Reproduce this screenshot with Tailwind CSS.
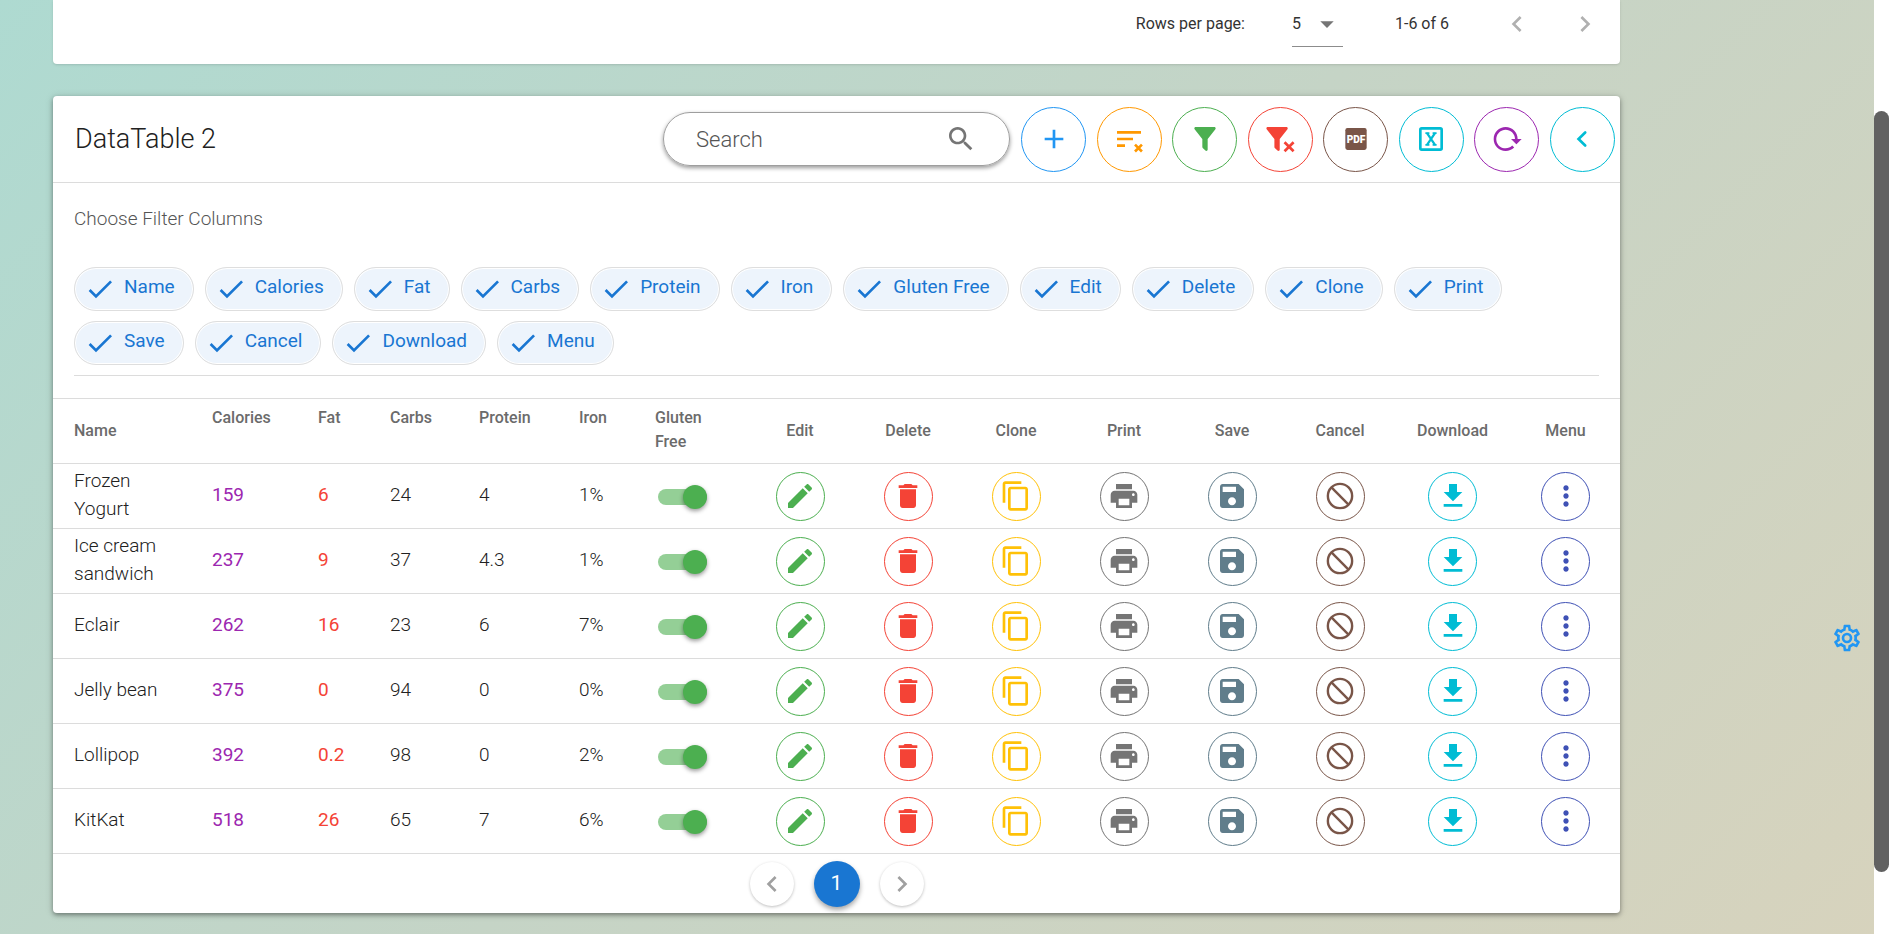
<!DOCTYPE html>
<html lang="en">
<head>
  <meta charset="UTF-8" />
  <meta name="viewport" content="width=device-width, initial-scale=1.0" />
  <title>DataTable</title>
  <script src="https://cdn.jsdelivr.net/npm/@tailwindcss/browser@4"></script>
</head>
<body class="h-screen overflow-hidden bg-linear-135 from-[#aedad1] via-[#c5d4c6] to-[#d7d3bd] font-[Roboto,sans-serif] text-[#212121]">

  <!-- Icon sprite -->
  <svg class="hidden" xmlns="http://www.w3.org/2000/svg">
    <symbol id="i-check" viewBox="0 0 24 24"><path d="M21,7L9,19L3.5,13.5L4.91,12.09L9,16.17L19.59,5.59L21,7Z"/></symbol>
    <symbol id="i-search" viewBox="0 0 24 24"><path d="M15.5 14h-.79l-.28-.27C15.41 12.59 16 11.11 16 9.5 16 5.91 13.09 3 9.5 3S3 5.91 3 9.5 5.91 16 9.5 16c1.61 0 3.09-.59 4.23-1.57l.27.28v.79l5 4.99L20.49 19l-4.99-5zm-6 0C7.01 14 5 11.99 5 9.5S7.01 5 9.5 5 14 7.01 14 9.5 11.99 14 9.5 14z"/></symbol>
    <symbol id="i-add" viewBox="0 0 24 24"><path d="M19 13h-6v6h-2v-6H5v-2h6V5h2v6h6v2z"/></symbol>
    <symbol id="i-sort-clear" viewBox="0 0 24 24"><path d="M3 6h18v2H3zM3 11h12v2H3zM3 16h6v2H3z"/><path d="M16.5 16.2l5.2 5.2M21.7 16.2l-5.2 5.2" fill="none" stroke="currentColor" stroke-width="2"/></symbol>
    <symbol id="i-filter" viewBox="0 0 24 24"><path d="M14,12V19.88C14.04,20.18 13.94,20.5 13.71,20.71C13.32,21.1 12.69,21.1 12.3,20.71L10.29,18.7C10.06,18.47 9.96,18.16 10,17.87V12H9.97L4.21,4.62C3.87,4.19 3.95,3.56 4.38,3.22C4.57,3.08 4.78,3 5,3H19C19.22,3 19.43,3.08 19.62,3.22C20.05,3.56 20.13,4.19 19.79,4.62L14.03,12H14Z"/></symbol>
    <symbol id="i-filter-clear" viewBox="0 0 24 24"><path transform="translate(-2.2 0)" d="M14,12V19.88C14.04,20.18 13.94,20.5 13.71,20.71C13.32,21.1 12.69,21.1 12.3,20.71L10.29,18.7C10.06,18.47 9.96,18.16 10,17.87V12H9.97L4.21,4.62C3.87,4.19 3.95,3.56 4.38,3.22C4.57,3.08 4.78,3 5,3H19C19.22,3 19.43,3.08 19.62,3.22C20.05,3.56 20.13,4.19 19.79,4.62L14.03,12H14Z"/><path d="M15.4 14.4l6.8 6.8M22.2 14.4l-6.8 6.8" fill="none" stroke="currentColor" stroke-width="2"/></symbol>
    <symbol id="i-pdf" viewBox="0 0 24 24"><rect x="4" y="3.8" width="16" height="16.4" rx="1.6"/><text x="12" y="14.7" text-anchor="middle" font-family="Roboto, sans-serif" font-size="7.6" font-weight="900" fill="#fff">PDF</text></symbol>
    <symbol id="i-excel" viewBox="0 0 24 24"><rect x="4" y="4" width="16" height="16" rx="1" fill="none" stroke="currentColor" stroke-width="2"/><path d="M9 7.6L15 16.4M15 7.6L9 16.4" fill="none" stroke="currentColor" stroke-width="1.7"/><path d="M7.8 7h3v1.2h-3zM13.2 7h3v1.2h-3zM7.8 15.8h3v1.2h-3zM13.2 15.8h3v1.2h-3z"/></symbol>
    <symbol id="i-reload" viewBox="0 0 24 24"><path d="M2 12C2 16.97 6.03 21 11 21C13.39 21 15.68 20.06 17.4 18.4L15.9 16.9C14.63 18.25 12.86 19 11 19C4.76 19 1.64 11.46 6.05 7.05C10.46 2.64 18 5.77 18 12H15L19 16H19.1L23 12H20C20 7.03 15.97 3 11 3C6.03 3 2 7.03 2 12Z"/></symbol>
    <symbol id="i-back" viewBox="0 0 24 24"><path d="M14.4 7.1L9.4 12L14.4 16.9" fill="none" stroke="currentColor" stroke-width="2" stroke-linecap="round"/></symbol>
    <symbol id="i-left" viewBox="0 0 24 24"><path d="M15.41,16.58L10.83,12L15.41,7.41L14,6L8,12L14,18L15.41,16.58Z"/></symbol>
    <symbol id="i-right" viewBox="0 0 24 24"><path d="M8.59,16.58L13.17,12L8.59,7.41L10,6L16,12L10,18L8.59,16.58Z"/></symbol>
    <symbol id="i-caret" viewBox="0 0 24 24"><path d="M7 10l5 5 5-5z"/></symbol>
    <symbol id="i-edit" viewBox="0 0 24 24"><path d="M3 17.25V21h3.75L17.81 9.94l-3.75-3.75L3 17.25zM20.71 7.04c.39-.39.39-1.02 0-1.41l-2.34-2.34c-.39-.39-1.02-.39-1.41 0l-1.83 1.83 3.75 3.75 1.83-1.83z"/></symbol>
    <symbol id="i-delete" viewBox="0 0 24 24"><path d="M6 19c0 1.1.9 2 2 2h8c1.1 0 2-.9 2-2V7H6v12zM19 4h-3.5l-1-1h-5l-1 1H5v2h14V4z"/></symbol>
    <symbol id="i-clone" viewBox="0 0 24 24"><path d="M16 1H4c-1.1 0-2 .9-2 2v14h2V3h12V1zm3 4H8c-1.1 0-2 .9-2 2v14c0 1.1.9 2 2 2h11c1.1 0 2-.9 2-2V7c0-1.1-.9-2-2-2zm0 16H8V7h11v14z"/></symbol>
    <symbol id="i-print" viewBox="0 0 24 24"><path d="M19 8H5c-1.66 0-3 1.34-3 3v6h4v4h12v-4h4v-6c0-1.66-1.34-3-3-3zm-3 11H8v-5h8v5zm3-7c-.55 0-1-.45-1-1s.45-1 1-1 1 .45 1 1-.45 1-1 1zm-1-9H6v4h12V3z"/></symbol>
    <symbol id="i-save" viewBox="0 0 24 24"><path d="M17 3H5c-1.11 0-2 .9-2 2v14c0 1.1.89 2 2 2h14c1.1 0 2-.9 2-2V7l-4-4zm-5 16c-1.66 0-3-1.34-3-3s1.34-3 3-3 3 1.34 3 3-1.34 3-3 3zm3-10H5V5h10v4z"/></symbol>
    <symbol id="i-cancel" viewBox="0 0 24 24"><path d="M5.6 5.6l12.8 12.8" fill="none" stroke="currentColor" stroke-width="1.8"/><circle cx="12" cy="12" r="9.1" fill="none" stroke="currentColor" stroke-width="1.8"/></symbol>
    <symbol id="i-download" viewBox="0 0 24 24"><path d="M19 9h-4V3H9v6H5l7 7 7-7zM5 18v2h14v-2H5z"/></symbol>
    <symbol id="i-menu" viewBox="0 0 24 24"><path d="M12 8c1.1 0 2-.9 2-2s-.9-2-2-2-2 .9-2 2 .9 2 2 2zm0 2c-1.1 0-2 .9-2 2s.9 2 2 2 2-.9 2-2-.9-2-2-2zm0 6c-1.1 0-2 .9-2 2s.9 2 2 2 2-.9 2-2-.9-2-2-2z"/></symbol>
    <symbol id="i-cog" viewBox="0 0 24 24"><path d="M12,8A4,4 0 0,1 16,12A4,4 0 0,1 12,16A4,4 0 0,1 8,12A4,4 0 0,1 12,8M12,10A2,2 0 0,0 10,12A2,2 0 0,0 12,14A2,2 0 0,0 14,12A2,2 0 0,0 12,10M10,22C9.75,22 9.54,21.82 9.5,21.58L9.13,18.93C8.5,18.68 7.96,18.34 7.44,17.94L4.95,18.95C4.73,19.03 4.46,18.95 4.34,18.73L2.34,15.27C2.21,15.05 2.27,14.78 2.46,14.63L4.57,12.97L4.5,12L4.57,11L2.46,9.37C2.27,9.22 2.21,8.95 2.34,8.73L4.34,5.27C4.46,5.05 4.73,4.96 4.95,5.05L7.44,6.05C7.96,5.66 8.5,5.32 9.13,5.07L9.5,2.42C9.54,2.18 9.75,2 10,2H14C14.25,2 14.46,2.18 14.5,2.42L14.87,5.07C15.5,5.32 16.04,5.66 16.56,6.05L19.05,5.05C19.27,4.96 19.54,5.05 19.66,5.27L21.66,8.73C21.79,8.95 21.73,9.22 21.54,9.37L19.43,11L19.5,12L19.43,13L21.54,14.63C21.73,14.78 21.79,15.05 21.66,15.27L19.66,18.73C19.54,18.95 19.27,19.04 19.05,18.95L16.56,17.95C16.04,18.34 15.5,18.68 14.87,18.93L14.5,21.58C14.46,21.82 14.25,22 14,22H10M11.25,4L10.88,6.61C9.68,6.86 8.62,7.5 7.85,8.39L5.44,7.35L4.69,8.65L6.8,10.2C6.4,11.37 6.4,12.64 6.8,13.8L4.68,15.36L5.43,16.66L7.86,15.62C8.63,16.5 9.68,17.14 10.87,17.38L11.24,20H12.76L13.13,17.39C14.32,17.14 15.37,16.5 16.14,15.62L18.57,16.66L19.32,15.36L17.2,13.81C17.6,12.64 17.6,11.37 17.2,10.2L19.31,8.65L18.56,7.35L16.15,8.39C15.38,7.5 14.32,6.86 13.12,6.62L12.75,4H11.25Z"/></symbol>
  </svg>

  <div class="flex h-full">
    <main class="flex-1 min-w-0 pl-[53px]">

      <!-- Footer of the first table -->
      <section class="h-16 bg-white rounded-b shadow-sm flex items-start justify-end pr-[19px] text-base text-[#333]">
        <label for="rowsPerPage" class="leading-[48px]">Rows per page:</label>
        <div class="relative ml-[47px] h-[47px] w-[51px] border-b border-[#8c8c8c]">
          <select id="rowsPerPage" class="w-full h-[48px] appearance-none bg-transparent outline-none">
            <option>5</option>
            <option>10</option>
          </select>
          <svg class="absolute right-0 top-2 size-8 fill-[#757575] pointer-events-none"><use href="#i-caret"/></svg>
        </div>
        <span class="mx-[52px] leading-[48px]">1-6 of 6</span>
        <button aria-label="Previous page" class="h-12 mr-9 text-[#b0b0b0]"><svg class="size-8 fill-current"><use href="#i-left"/></svg></button>
        <button aria-label="Next page" class="h-12 text-[#b0b0b0]"><svg class="size-8 fill-current"><use href="#i-right"/></svg></button>
      </section>

      <section class="mt-8 bg-white rounded shadow-[0_2px_4px_rgba(0,0,0,0.35),0_1px_8px_rgba(0,0,0,0.15)]">
        <!-- Toolbar -->
        <div class="flex items-center h-[87px] pl-[22px] pr-[5px] border-b border-[#dcdcdc]">
          <h2 class="flex-1 text-[27px] font-light">DataTable 2</h2>
          <div class="flex items-center w-[347px] h-[54px] mr-[11px] px-8 rounded-full border border-[#9e9e9e] shadow-[0_2px_4px_rgba(0,0,0,0.4)]">
            <input type="text" aria-label="Search" placeholder="Search" class="flex-1 min-w-0 text-[22px] font-light outline-none placeholder-[#555]">
            <svg class="size-8 fill-[#757575]"><use href="#i-search"/></svg>
          </div>
          <div class="flex justify-between w-[594px]">
            <button aria-label="Add" class="size-[65px] flex items-center justify-center rounded-full border text-[#2196f3]"><svg class="size-8 fill-current"><use href="#i-add"/></svg></button>
            <button aria-label="Clear sort" class="size-[65px] flex items-center justify-center rounded-full border text-[#ff9800]"><svg class="size-8 fill-current"><use href="#i-sort-clear"/></svg></button>
            <button aria-label="Filter" class="size-[65px] flex items-center justify-center rounded-full border text-[#4caf50]"><svg class="size-8 fill-current"><use href="#i-filter"/></svg></button>
            <button aria-label="Clear filter" class="size-[65px] flex items-center justify-center rounded-full border text-[#f44336]"><svg class="size-8 fill-current"><use href="#i-filter-clear"/></svg></button>
            <button aria-label="Export PDF" class="size-[65px] flex items-center justify-center rounded-full border text-[#795548]"><svg class="size-8 fill-current"><use href="#i-pdf"/></svg></button>
            <button aria-label="Export Excel" class="size-[65px] flex items-center justify-center rounded-full border text-[#00bcd4]"><svg class="size-8 fill-current"><use href="#i-excel"/></svg></button>
            <button aria-label="Reload" class="size-[65px] flex items-center justify-center rounded-full border text-[#9c27b0]"><svg class="size-8 fill-current"><use href="#i-reload"/></svg></button>
            <button aria-label="Collapse" class="size-[65px] flex items-center justify-center rounded-full border text-[#00bcd4]"><svg class="size-8 fill-current"><use href="#i-back"/></svg></button>
          </div>
        </div>

        <!-- Column filter -->
        <div class="px-[21px] py-[22px]">
          <p class="text-[19px] leading-7 font-light text-[#555]">Choose Filter Columns</p>
          <div id="chips" class="flex flex-wrap gap-x-[11px] gap-y-[10px] mt-[34px] pb-[10px] border-b border-[#dcdcdc]"></div>
        </div>

        <table class="w-full table-fixed border-collapse text-[19px] leading-7">
          <colgroup>
            <col class="w-[138px]"><col class="w-[106px]"><col class="w-[72px]"><col class="w-[89px]"><col class="w-[100px]"><col class="w-[76px]"><col class="w-[112px]">
            <col class="w-[108px]"><col class="w-[108px]"><col class="w-[108px]"><col class="w-[108px]"><col class="w-[108px]"><col class="w-[108px]"><col class="w-[117px]"><col class="w-[109px]">
          </colgroup>
          <thead>
            <tr class="h-[65px] border-y border-[#dcdcdc] text-base leading-6 text-[#6b6b6b] text-left">
              <th class="pl-[21px] font-medium">Name</th>
              <th class="pl-[21px] pt-[7px] font-medium align-top">Calories</th>
              <th class="pl-[21px] pt-[7px] font-medium align-top">Fat</th>
              <th class="pl-[21px] pt-[7px] font-medium align-top">Carbs</th>
              <th class="pl-[21px] pt-[7px] font-medium align-top">Protein</th>
              <th class="pl-[21px] pt-[7px] font-medium align-top">Iron</th>
              <th class="pl-[21px] pr-4 pt-[7px] font-medium align-top">Gluten Free</th>
              <th class="font-medium text-center">Edit</th>
              <th class="font-medium text-center">Delete</th>
              <th class="font-medium text-center">Clone</th>
              <th class="font-medium text-center">Print</th>
              <th class="font-medium text-center">Save</th>
              <th class="font-medium text-center">Cancel</th>
              <th class="font-medium text-center">Download</th>
              <th class="font-medium text-center">Menu</th>
            </tr>
          </thead>
          <tbody id="rows"></tbody>
        </table>

        <!-- Pagination -->
        <nav class="flex items-center justify-center gap-5 h-[59px]">
          <button aria-label="Previous" class="size-11 flex items-center justify-center rounded-full bg-white text-[#a0a0a0] shadow-[0_1px_3px_rgba(0,0,0,0.25)]"><svg class="size-8 fill-current"><use href="#i-left"/></svg></button>
          <button class="size-[46px] rounded-full bg-[#1976d2] text-white text-[21px] shadow-[0_3px_5px_rgba(0,0,0,0.35)]">1</button>
          <button aria-label="Next" class="size-11 flex items-center justify-center rounded-full bg-white text-[#a0a0a0] shadow-[0_1px_3px_rgba(0,0,0,0.25)]"><svg class="size-8 fill-current"><use href="#i-right"/></svg></button>
        </nav>
      </section>
    </main>

    <aside class="w-[254px] flex items-center justify-end pt-[342px] pr-[11px]">
      <button aria-label="Settings" class="text-[#2196f3]"><svg class="size-8 fill-current"><use href="#i-cog"/></svg></button>
    </aside>

    <!-- Scrollbar -->
    <div class="w-[15px] bg-white pt-[111px]">
      <div class="h-[761px] rounded-full bg-[#616161]"></div>
    </div>
  </div>

  <script>
    const columns = ['Name', 'Calories', 'Fat', 'Carbs', 'Protein', 'Iron', 'Gluten Free', 'Edit', 'Delete', 'Clone', 'Print', 'Save', 'Cancel', 'Download', 'Menu'];

    const rows = [
      ['Frozen Yogurt', 159, 6, 24, 4, '1%'],
      ['Ice cream sandwich', 237, 9, 37, 4.3, '1%'],
      ['Eclair', 262, 16, 23, 6, '7%'],
      ['Jelly bean', 375, 0, 94, 0, '0%'],
      ['Lollipop', 392, 0.2, 98, 0, '2%'],
      ['KitKat', 518, 26, 65, 7, '6%'],
    ];

    const actions = [
      ['edit', 'text-[#4caf50]'],
      ['delete', 'text-[#f44336]'],
      ['clone', 'text-[#ffc107]'],
      ['print', 'text-[#757575]'],
      ['save', 'text-[#607d8b]'],
      ['cancel', 'text-[#795548]'],
      ['download', 'text-[#00bcd4]'],
      ['menu', 'text-[#3f51b5]'],
    ];

    document.getElementById('chips').innerHTML = columns.map(name => `
      <button aria-pressed="true" class="flex items-center gap-2 h-11 pl-[9px] pr-[18px] rounded-full border border-[#dedede] bg-[#edf4fc] text-[19px] text-[#1976d2] inset-ring inset-ring-white">
        <svg class="size-8 fill-current"><use href="#i-check"/></svg><span class="pb-1">${name}</span>
      </button>`).join('');

    document.getElementById('rows').innerHTML = rows.map(([name, calories, fat, carbs, protein, iron]) => `
      <tr class="h-[65px] border-b border-[#dcdcdc] font-light">
        <td class="pl-[21px] pr-6 pb-[2px]">${name}</td>
        <td class="pl-[21px] pb-[2px] font-normal text-[#9c27b0]">${calories}</td>
        <td class="pl-[21px] pb-[2px] font-normal text-[#f44336]">${fat}</td>
        <td class="pl-[21px] pb-[2px]">${carbs}</td>
        <td class="pl-[21px] pb-[2px]">${protein}</td>
        <td class="pl-[21px] pb-[2px]">${iron}</td>
        <td class="pl-6">
          <input type="checkbox" checked aria-label="${name} gluten free"
                 class="block mt-[2px] relative appearance-none w-[49px] h-4 rounded-full bg-[#94cf96] before:absolute before:right-0 before:-top-1 before:size-6 before:rounded-full before:bg-[#4caf50] before:shadow-[0_2px_4px_rgba(0,0,0,0.4)]">
        </td>
        ${actions.map(([icon, color]) => `
        <td>
          <button aria-label="${icon} ${name}" class="size-[49px] mx-auto flex items-center justify-center rounded-full border ${color}">
            <svg class="size-8 fill-current"><use href="#i-${icon}"/></svg>
          </button>
        </td>`).join('')}
      </tr>`).join('');
  </script>
</body>
</html>
